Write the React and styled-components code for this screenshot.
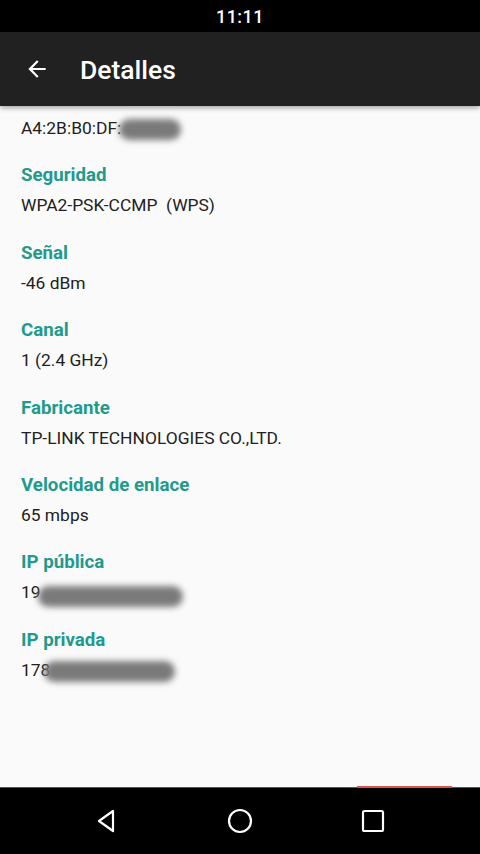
import styled, { createGlobalStyle } from "styled-components";

const Global = createGlobalStyle`
  html, body { margin: 0; padding: 0; background: #000; }
  body { font-family: Roboto, "Noto Sans", sans-serif; }
`;

const Screen = styled.div`
  width: 480px;
  height: 854px;
  display: flex;
  flex-direction: column;
  background: #fafafa;
  overflow: hidden;
`;

const StatusBar = styled.div`
  height: 32px;
  background: #000;
  color: #fff;
  font-size: 18px;
  font-weight: 500;
  display: flex;
  align-items: center;
  justify-content: center;
  letter-spacing: 0.5px;
`;

const Toolbar = styled.div`
  height: 74px;
  background: #212121;
  display: flex;
  align-items: center;
  padding-left: 24px;
  gap: 30px;
  box-shadow: 0 2px 5px rgba(0, 0, 0, 0.35);
  position: relative;
  z-index: 1;
`;

const Title = styled.div`
  color: #fff;
  font-size: 26.5px;
  font-weight: 500;
`;

const Content = styled.div`
  flex: 1;
  padding: 7px 21px 0;
  display: flex;
  flex-direction: column;
  gap: 16.4px;
`;

const Item = styled.div`
  display: flex;
  flex-direction: column;
`;

const Label = styled.div`
  color: #1f9a8c;
  font-size: 18.7px;
  font-weight: 700;
  line-height: 30px;
`;

const Value = styled.div`
  color: #212121;
  font-size: 17.4px;
  line-height: 31px;
  white-space: pre;
`;

const Blur = styled.span`
  display: inline-block;
  vertical-align: middle;
  width: ${p => p.w}px;
  height: 21px;
  margin-left: ${p => p.ml || 0}px;
  margin-top: ${p => p.mt || 0}px;
  border-radius: 12px;
  background: #7a7a7a;
  filter: blur(3px);
`;

const NavBar = styled.div`
  height: 66px;
  background: #000;
  display: flex;
  align-items: center;
  justify-content: center;
  gap: 107px;
  position: relative;
  border-top: 1px solid #555;
`;

const RedLine = styled.div`
  position: absolute;
  top: -2px;
  left: 357px;
  width: 95px;
  height: 2px;
  background: #d9534f;
`;

const items = [
  { label: "Seguridad", value: "WPA2-PSK-CCMP  (WPS)" },
  { label: "Señal", value: "-46 dBm" },
  { label: "Canal", value: "1 (2.4 GHz)" },
  { label: "Fabricante", value: "TP-LINK TECHNOLOGIES CO.,LTD." },
  { label: "Velocidad de enlace", value: "65 mbps" },
];

export default function App() {
  return (
    <Screen>
      <Global />
      <StatusBar>11:11</StatusBar>
      <Toolbar>
        <svg width="26" height="26" viewBox="0 0 24 24">
          <path d="M20 11H7.83l5.59-5.59L12 4l-8 8 8 8 1.41-1.41L7.83 13H20v-2z" fill="#fff" />
        </svg>
        <Title>Detalles</Title>
      </Toolbar>
      <Content>
        <Item>
          <Value>A4:2B:B0:DF:<Blur w={62} ml={-2} /></Value>
        </Item>
        {items.map(it => (
          <Item key={it.label}>
            <Label>{it.label}</Label>
            <Value>{it.value}</Value>
          </Item>
        ))}
        <Item>
          <Label>IP pública</Label>
          <Value>19<Blur w={145} ml={-3} mt={6} /></Value>
        </Item>
        <Item>
          <Label>IP privada</Label>
          <Value>178<Blur w={131} ml={-6} /></Value>
        </Item>
      </Content>
      <NavBar>
        <RedLine />
        <svg width="26" height="26" viewBox="0 0 26 26">
          <path d="M19 3 L5 13 L19 23 Z" fill="none" stroke="#fff" strokeWidth="2.2" strokeLinejoin="round" />
        </svg>
        <svg width="26" height="26" viewBox="0 0 26 26">
          <circle cx="13" cy="13" r="11" fill="none" stroke="#fff" strokeWidth="2.2" />
        </svg>
        <svg width="26" height="26" viewBox="0 0 26 26">
          <rect x="3" y="3" width="20" height="20" rx="1.5" fill="none" stroke="#fff" strokeWidth="2.2" />
        </svg>
      </NavBar>
    </Screen>
  );
}
